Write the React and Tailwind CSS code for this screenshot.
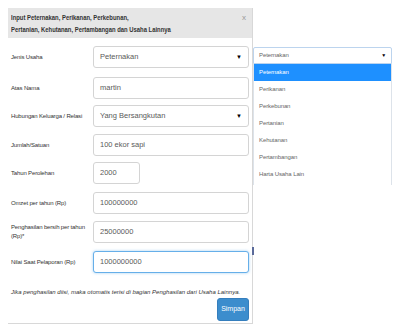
import React from "react";

const FONT = "font-['Liberation_Sans',Arial,sans-serif]";

const FIELDS = [
  { label: "Jenis Usaha", value: "Peternakan", select: true, mt: "mt-0" },
  { label: "Atas Nama", value: "martin", mt: "mt-[9px]" },
  { label: "Hubungan Keluarga / Relasi", value: "Yang Bersangkutan", select: true, mt: "mt-[6px]" },
  { label: "Jumlah/Satuan", value: "100 ekor sapi", mt: "mt-[7px]" },
  { label: "Tahun Perolehan", value: "2000", short: true, mt: "mt-[6px]" },
  { label: "Omzet per tahun (Rp)", value: "100000000", mt: "mt-[8px]" },
  { label: "Penghasilan bersih per tahun (Rp)*", value: "25000000", mt: "mt-[7px]" },
  { label: "Nilai Saat Pelaporan (Rp)", value: "1000000000", focus: true, mt: "mt-[8px]" },
];

const OPTIONS = [
  "Peternakan",
  "Perikanan",
  "Perkebunan",
  "Pertanian",
  "Kehutanan",
  "Pertambangan",
  "Harta Usaha Lain",
];

const Field = ({ label, value, select, short, focus, mt }) => (
  <div className={`flex items-center h-[22px] ${mt}`}>
    <div className="w-[82px] shrink-0 text-[6px] leading-[9px] tracking-[-0.15px] text-[#333] pr-[2px]">
      {label}
    </div>
    <div
      className={`h-[22px] flex items-center rounded-[3px] border bg-white px-[6px] text-[7.5px] text-[#5a5a5a] ${
        short ? "w-[47px]" : "flex-1"
      } ${
        focus
          ? "border-[#66afe9] shadow-[0_0_3px_rgba(102,175,233,0.6)]"
          : "border-[#d4d4d4]"
      }`}
    >
      <span className="flex-1">{value}</span>
      {select && <span className="text-[6px] text-black">▼</span>}
    </div>
  </div>
);

export default function App() {
  return (
    <div className={`relative w-[400px] h-[332px] bg-white overflow-hidden ${FONT}`}>
      <div className="ml-[8px] mt-[8px] w-[245px] h-[316px] border-r border-b border-[#d8d8d8] flex flex-col">
        {/* header */}
        <div className="h-[30px] bg-[#e6e6e6] pl-[3px] pr-[6px] pt-[4px] flex">
          <div className="flex-1">
            <div className="inline-block origin-left scale-x-[0.84] whitespace-nowrap text-[7px] leading-[12px] font-bold text-[#333]">
              Input Peternakan, Perikanan, Perkebunan,
              <br />
              Pertanian, Kehutanan, Pertambangan dan Usaha Lainnya
            </div>
          </div>
          <div className="text-[8px] leading-[12px] text-[#999]">x</div>
        </div>

        {/* body */}
        <div className="flex-1 pl-[3px] pr-[3px] pt-[8px] flex flex-col">
          {FIELDS.map((f) => (
            <Field key={f.label} {...f} />
          ))}
          <div className="mt-[15px] text-[6px] leading-[9px] italic text-[#333] whitespace-nowrap">
            Jika penghasilan diisi, maka otomatis terisi di bagian Penghasilan dari Usaha Lainnya.
          </div>
          <div className="flex justify-end mt-[1px]">
            <button className="w-[32px] h-[23px] rounded-[3px] bg-[#3c8dcd] border border-[#357ebd] text-white text-[7px]">
              Simpan
            </button>
          </div>
        </div>
      </div>

      {/* open select menu */}
      <div className="absolute left-[253px] top-[47px] w-[139px] text-[6px] tracking-[-0.1px] text-[#666]">
        <div className="h-[17px] flex items-center px-[5px] border border-[#bcd4ee] rounded-t-[2px] bg-white">
          <span className="flex-1">Peternakan</span>
          <span className="text-[5px] text-black">▼</span>
        </div>
        <div className="border-l border-r border-[#dde3ea] pb-[2px]">
          {OPTIONS.map((o, i) => (
            <div
              key={o}
              className={`h-[17px] flex items-center px-[5px] ${
                i === 0 ? "bg-[#1e90ff] text-white" : ""
              }`}
            >
              {o}
            </div>
          ))}
        </div>
      </div>
      <div className="absolute left-[252px] top-[247px] w-[2px] h-[8px] bg-[#5a6a9a]" />
    </div>
  );
}
